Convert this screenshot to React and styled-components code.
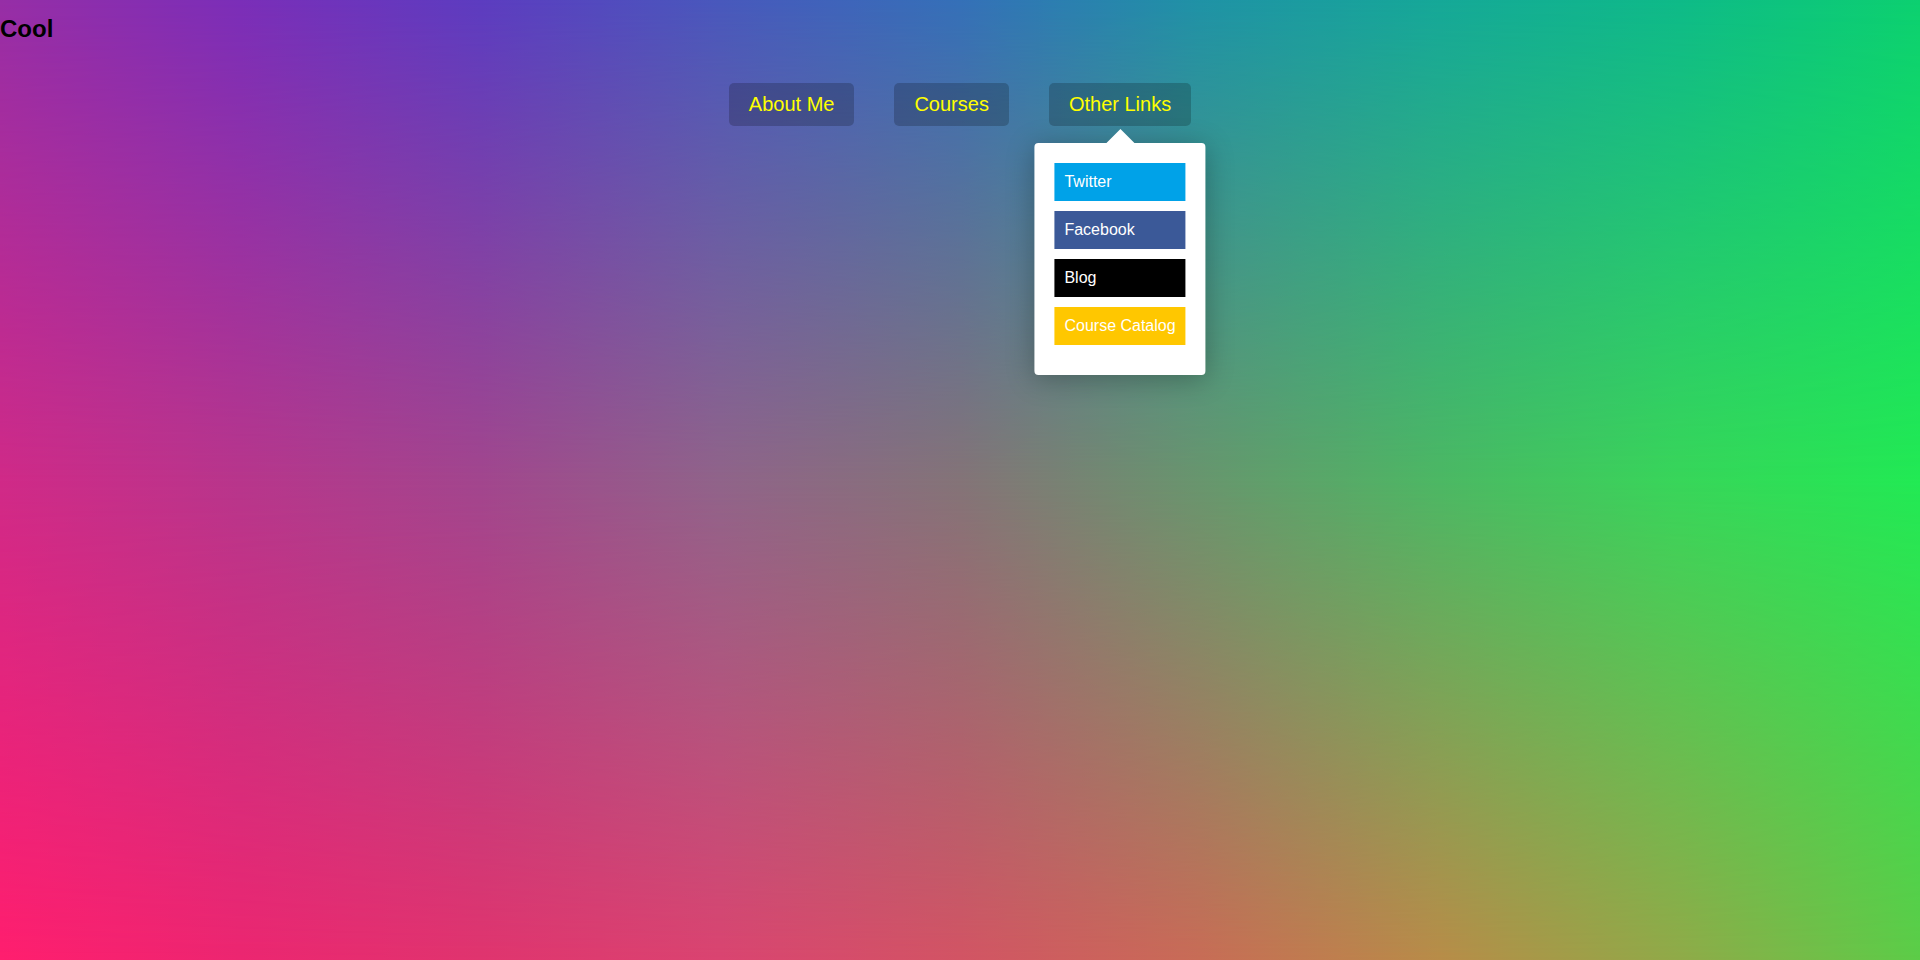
import styled, { createGlobalStyle } from "styled-components"

const GlobalStyle = createGlobalStyle`
    html, body {
        margin: 0;
        padding: 0;
    }

    body {
        font-family: "Liberation Sans", Arial, sans-serif;
    }
`

// three horizontal colour ramps, blended top -> middle -> bottom
const TOP_ROW = "#962ea6 0%, #7a2eb8 12.5%, #5c3cc0 25%, #4858bc 37.5%, #3470b8 50%, #1f92a6 62.5%, #15a898 75%, #0eba88 87.5%, #0cd070 100%"
const MID_ROW = "#d02a88 0%, #b8368c 12.5%, #a2468e 25%, #90648a 37.5%, #847478 50%, #68966e 62.5%, #4cb864 75%, #38d65a 87.5%, #22ea54 100%"
const BOTTOM_ROW = "#ff1e6e 0%, #ec2670 12.5%, #e0346e 25%, #da4470 37.5%, #d25464 50%, #c86c56 62.5%, #b88c48 75%, #90aa48 87.5%, #5ccc48 100%"

const Page = styled.div`
    position: relative;
    min-height: 100vh;
    background: linear-gradient(to right, ${MID_ROW});
    overflow: hidden;

    &::before,
    &::after {
        content: "";
        position: absolute;
        inset: 0;
        pointer-events: none;
    }

    &::before {
        background: linear-gradient(to right, ${TOP_ROW});
        -webkit-mask-image: linear-gradient(to bottom, #000 0%, transparent 50%);
        mask-image: linear-gradient(to bottom, #000 0%, transparent 50%);
    }

    &::after {
        background: linear-gradient(to right, ${BOTTOM_ROW});
        -webkit-mask-image: linear-gradient(to top, #000 0%, transparent 50%);
        mask-image: linear-gradient(to top, #000 0%, transparent 50%);
    }
`

const Content = styled.div`
    position: relative;
    z-index: 1;
`

const Logo = styled.h1`
    margin: 15px 0 0;
    font-size: 24px;
    font-weight: 700;
    color: #000;
`

const Nav = styled.nav`
    display: flex;
    justify-content: center;
    gap: 40px;
    margin-top: 40px;
`

const NavItem = styled.div`
    position: relative;
`

const NavButton = styled.a`
    display: block;
    padding: 10px 20px;
    font-size: 20px;
    color: yellow;
    background-color: rgba(0, 0, 0, 0.2);
    border-radius: 5px;
    text-decoration: none;
    cursor: pointer;
`

const Dropdown = styled.div`
    position: absolute;
    top: calc(100% + 17px);
    left: 50%;
    transform: translateX(-50%);
    padding: 20px 20px 20px;
    background: #fff;
    border-radius: 4px;
    box-shadow: 0 4px 28px rgba(0, 0, 0, 0.28);

    &::before {
        content: "";
        position: absolute;
        top: -14px;
        left: 50%;
        margin-left: -14px;
        border-left: 14px solid transparent;
        border-right: 14px solid transparent;
        border-bottom: 14px solid #fff;
    }
`

const DropLink = styled.a`
    display: block;
    margin-bottom: 10px;
    padding: 10px;
    font-size: 16px;
    color: #fff;
    white-space: nowrap;
    text-decoration: none;
    background-color: ${(props) => props.color};
`

const links = [
    { label: "Twitter", color: "#00a2e8" },
    { label: "Facebook", color: "#3b5998" },
    { label: "Blog", color: "#000000" },
    { label: "Course Catalog", color: "#ffc700" },
]

function App() {
    return (
        <Page>
            <GlobalStyle />
            <Content>
                <Logo>Cool</Logo>

                <Nav>
                    <NavItem>
                        <NavButton>About Me</NavButton>
                    </NavItem>
                    <NavItem>
                        <NavButton>Courses</NavButton>
                    </NavItem>
                    <NavItem>
                        <NavButton>Other Links</NavButton>
                        <Dropdown>
                            {links.map((link) => (
                                <DropLink key={link.label} color={link.color}>{link.label}</DropLink>
                            ))}
                        </Dropdown>
                    </NavItem>
                </Nav>
            </Content>
        </Page>
    )
}

export default App
